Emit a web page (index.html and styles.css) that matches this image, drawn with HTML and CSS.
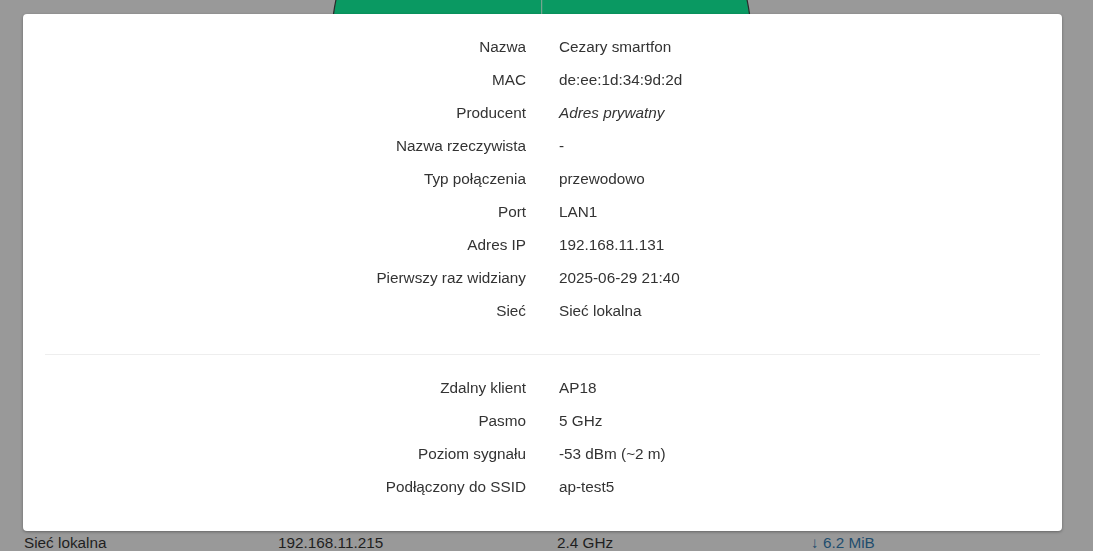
FILE: index.html
```html
<!DOCTYPE html>
<html lang="pl">
<head>
  <meta charset="UTF-8">
  <meta name="viewport" content="width=device-width, initial-scale=1.0">
  <title>Urządzenia - szczegóły</title>
  <link rel="stylesheet" href="styles.css">
</head>
<body>
  <!-- Background page (under the dialog) -->
  <div class="page">
    <svg class="chart" viewBox="0 0 1093 14" width="1093" height="14">
      <circle cx="541.5" cy="43" r="210" fill="#0a9962" stroke="#2b2b2b" stroke-width="1.2"/>
      <line x1="541.7" y1="0" x2="541.7" y2="14" stroke="#8fa89b" stroke-width="1"/>
    </svg>

    <div class="clients">
      <div class="client-row">
        <span>Sieć lokalna</span>
        <span>192.168.11.215</span>
        <span>2.4 GHz</span>
        <span class="traffic">↓ 6.2 MiB</span>
      </div>
    </div>
  </div>

  <!-- Device details dialog -->
  <div class="overlay">
    <div class="modal">
      <div class="details">
        <div class="label">Nazwa</div><div class="value">Cezary smartfon</div>
        <div class="label">MAC</div><div class="value">de:ee:1d:34:9d:2d</div>
        <div class="label">Producent</div><div class="value"><em>Adres prywatny</em></div>
        <div class="label">Nazwa rzeczywista</div><div class="value">-</div>
        <div class="label">Typ połączenia</div><div class="value">przewodowo</div>
        <div class="label">Port</div><div class="value">LAN1</div>
        <div class="label">Adres IP</div><div class="value">192.168.11.131</div>
        <div class="label">Pierwszy raz widziany</div><div class="value">2025-06-29 21:40</div>
        <div class="label">Sieć</div><div class="value">Sieć lokalna</div>
      </div>

      <hr class="divider">

      <div class="details">
        <div class="label">Zdalny klient</div><div class="value">AP18</div>
        <div class="label">Pasmo</div><div class="value">5 GHz</div>
        <div class="label">Poziom sygnału</div><div class="value">-53 dBm (~2 m)</div>
        <div class="label">Podłączony do SSID</div><div class="value">ap-test5</div>
      </div>
    </div>
  </div>
</body>
</html>
```

FILE: styles.css
```css
html, body {
  margin: 0;
  padding: 0;
}
body {
  font-family: "Liberation Sans", Arial, sans-serif;
  font-size: 15.3px;
  line-height: 21px;
  background-color: #999999;
  color: #1f1f1f;
  overflow: hidden;
}
.page {
  height: 553px;
  display: flex;
  flex-direction: column;
  justify-content: space-between;
}
.chart {
  display: block;
}
.client-row {
  display: grid;
  grid-template-columns: 254px 279px 254px 1fr;
  padding: 0 0 0 24px;
}
.traffic {
  color: #1f4d6e;
}

.overlay {
  position: fixed;
  top: 0;
  left: 0;
  right: 0;
  bottom: 0;
  padding: 14px 0 0 23px;
}
.modal {
  width: 1039px;
  height: 517px;
  box-sizing: border-box;
  padding: 16px 22px 28px;
  background-color: #ffffff;
  border-radius: 4px;
  box-shadow: 0 1px 3px rgba(0, 0, 0, 0.35);
  color: #333333;
}
.details {
  display: grid;
  grid-template-columns: 1fr 1fr;
  column-gap: 33px;
}
.details .label,
.details .value {
  padding: 6px 0;
}
.details .label {
  text-align: right;
}
.divider {
  border: 0;
  border-top: 1px solid #eeeeee;
  margin: 27px 0 16px;
}
```
